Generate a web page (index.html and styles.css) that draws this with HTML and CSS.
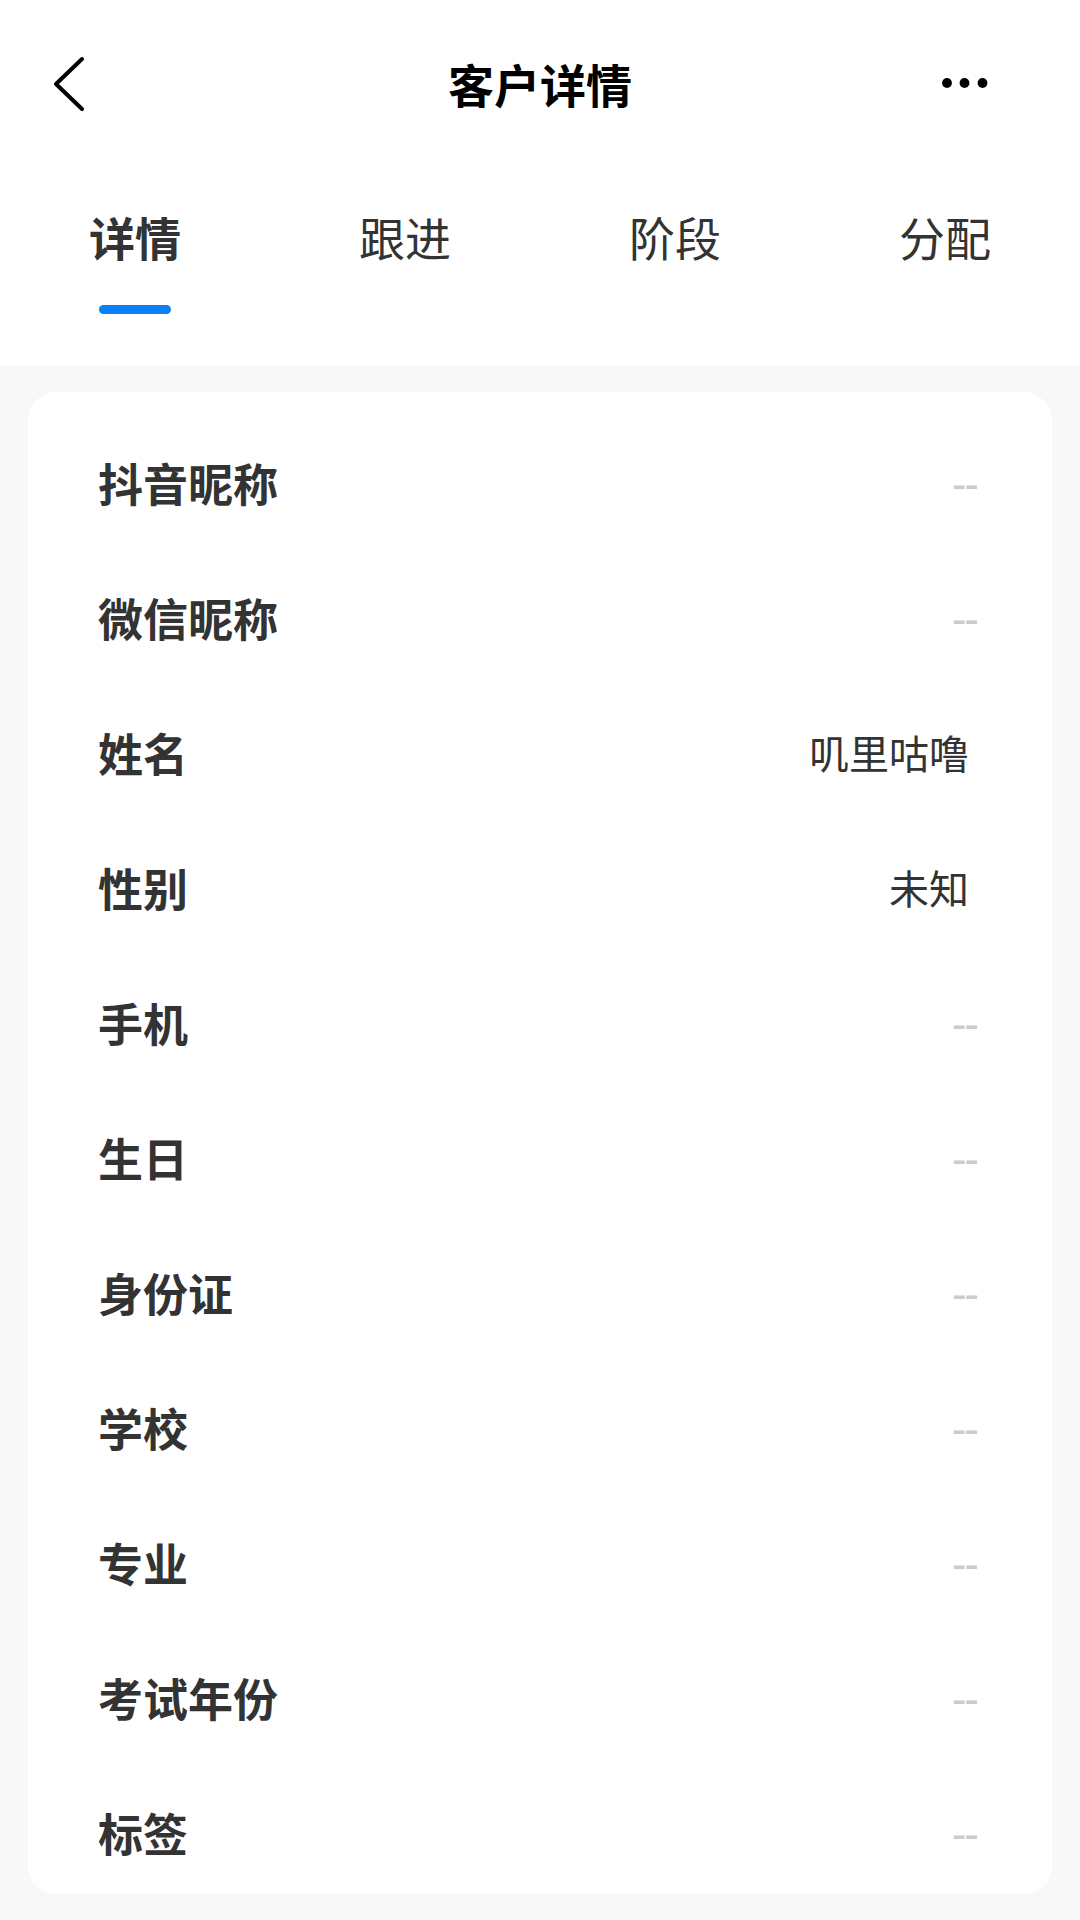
FILE: index.html
```html
<!DOCTYPE html>
<html lang="zh-CN">
<head>
<meta charset="utf-8">
<title>客户详情</title>
<link rel="stylesheet" href="styles.css">
</head>
<body>
<div class="page">
  <header class="top">
    <nav class="navbar">
      <div class="nav-left">
        <svg class="icon-back" width="34" height="64" viewBox="0 0 34 64" aria-hidden="true">
          <path d="M30 4 L4 29 L30 54" fill="none" stroke="#000" stroke-width="4" stroke-linecap="round" stroke-linejoin="round"/>
        </svg>
      </div>
      <h1 class="nav-title">客户详情</h1>
      <div class="nav-right">
        <svg class="icon-more" width="50" height="12" viewBox="0 0 50 12" aria-hidden="true">
          <circle cx="5" cy="6" r="4.9" fill="#000"/>
          <circle cx="22.5" cy="6" r="4.9" fill="#000"/>
          <circle cx="40.5" cy="6" r="4.9" fill="#000"/>
        </svg>
      </div>
    </nav>
    <div class="tabs">
      <div class="tab active"><span class="tab-label">详情</span><i class="tab-bar"></i></div>
      <div class="tab"><span class="tab-label">跟进</span><i class="tab-bar"></i></div>
      <div class="tab"><span class="tab-label">阶段</span><i class="tab-bar"></i></div>
      <div class="tab"><span class="tab-label">分配</span><i class="tab-bar"></i></div>
    </div>
  </header>

  <main class="content">
    <section class="card">
      <div class="row"><span class="label">抖音昵称</span><span class="value empty">--</span></div>
      <div class="row"><span class="label">微信昵称</span><span class="value empty">--</span></div>
      <div class="row"><span class="label">姓名</span><span class="value">叽里咕噜</span></div>
      <div class="row"><span class="label">性别</span><span class="value">未知</span></div>
      <div class="row"><span class="label">手机</span><span class="value empty">--</span></div>
      <div class="row"><span class="label">生日</span><span class="value empty">--</span></div>
      <div class="row"><span class="label">身份证</span><span class="value empty">--</span></div>
      <div class="row"><span class="label">学校</span><span class="value empty">--</span></div>
      <div class="row"><span class="label">专业</span><span class="value empty">--</span></div>
      <div class="row"><span class="label">考试年份</span><span class="value empty">--</span></div>
      <div class="row"><span class="label">标签</span><span class="value empty">--</span></div>
    </section>
  </main>
</div>
</body>
</html>
```

FILE: styles.css
```css
* {
  box-sizing: border-box;
}

html, body {
  margin: 0;
  padding: 0;
}

body {
  width: 1080px;
  height: 1920px;
  overflow: hidden;
  background: #f8f8f8;
  font-family: "Noto Sans CJK SC", "Noto Sans", sans-serif;
  color: #333;
}

.page {
  display: flex;
  flex-direction: column;
  height: 1920px;
}

/* Top area: navigation bar + tab strip */
.top {
  background: #fff;
}

.navbar {
  height: 174px;
  display: grid;
  grid-template-columns: 1fr auto 1fr;
  align-items: center;
}

.nav-left {
  display: flex;
  align-items: center;
  padding-left: 52px;
}

.icon-back {
  display: block;
  overflow: visible;
}

.nav-title {
  margin: 0;
  padding-bottom: 8px;
  font-size: 46px;
  font-weight: 700;
  color: #000;
  line-height: 64px;
}

.nav-right {
  display: flex;
  justify-content: flex-end;
  padding-right: 88px;
  padding-bottom: 8px;
}

.icon-more {
  display: block;
}

.tabs {
  display: grid;
  grid-template-columns: repeat(4, 1fr);
  padding: 31px 0 52px;
}

.tab {
  display: flex;
  flex-direction: column;
  align-items: center;
}

.tab-label {
  font-size: 46px;
  line-height: 62px;
  color: #333;
  font-weight: 400;
}

.tab.active .tab-label {
  font-weight: 700;
}

.tab-bar {
  display: block;
  width: 72px;
  height: 9px;
  margin-top: 38px;
  border-radius: 5px;
  background: transparent;
}

.tab.active .tab-bar {
  background: #0b80f4;
}

/* Detail card */
.content {
  padding: 26px 28px 27px;
}

.card {
  background: #fff;
  border-radius: 28px;
  padding: 38px 75px 0 70px;
  display: flex;
  flex-direction: column;
  gap: 21px;
}

.row {
  height: 114px;
  display: flex;
  align-items: center;
  justify-content: space-between;
}

.label {
  font-size: 45px;
  font-weight: 700;
  color: #333;
  padding-bottom: 10px;
}

.value {
  font-size: 40px;
  color: #333;
  margin-right: 8px;
  padding-bottom: 10px;
}

.value.empty {
  margin-right: 0;
  font-family: "Liberation Sans", Arial, sans-serif;
  font-size: 44px;
  letter-spacing: -2px;
  color: #cccccc;
  padding-bottom: 6px;
}
```
